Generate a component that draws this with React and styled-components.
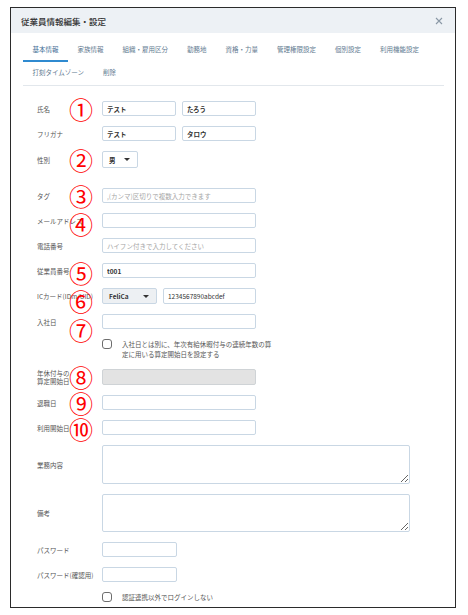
import React from "react";
import styled, { createGlobalStyle } from "styled-components";

const GlobalStyle = createGlobalStyle`
  body {
    margin: 0;
    background: #ffffff;
    font-family: "Noto Sans CJK JP", "Noto Sans", sans-serif;
  }
`;

const Frame = styled.div`
  margin: 7px 0 0 10px;
  width: 446px;
  box-sizing: border-box;
  border: 1.5px solid #2b2b2b;
  background: #fff;
`;

const Header = styled.div`
  height: 25px;
  background: #edf1f5;
  display: flex;
  align-items: center;
  justify-content: space-between;
  padding: 0 12px 0 10px;
`;

const Title = styled.h1`
  margin: 0;
  font-size: 8.5px;
  font-weight: 500;
  color: #333;
`;

const Body = styled.div`
  padding: 0 11px 0 12px;
`;

const TabBar = styled.div`
  display: flex;
  flex-wrap: wrap;
  padding-top: 6px;
  border-bottom: 1px solid #e2e7ec;
`;

const Tab = styled.div`
  height: 21px;
  line-height: 21px;
  padding: 0 9.5px;
  font-size: 6.5px;
  white-space: nowrap;
  color: ${(p) => (p.$active ? "#3f6f96" : "#5f7a90")};
  border-bottom: 2px solid ${(p) => (p.$active ? "#2f8ad0" : "transparent")};
`;

const Form = styled.div`
  display: flex;
  flex-direction: column;
  gap: 10px;
  padding: 15px 0 5px 14px;
`;

const Row = styled.div`
  position: relative;
  display: flex;
  align-items: ${(p) => (p.$top ? "flex-start" : "center")};
  gap: 6px;
  margin-bottom: ${(p) => p.$extra || 0}px;
`;

const Label = styled.div`
  width: 59px;
  flex-shrink: 0;
  font-size: 6.5px;
  line-height: 8px;
  color: #555;
  white-space: nowrap;
`;

const Input = styled.input`
  box-sizing: border-box;
  width: ${(p) => p.$w}px;
  height: ${(p) => p.$h || 15}px;
  margin: 0;
  padding: 0 4px;
  border: 1.5px solid #c9d7e4;
  border-radius: 2px;
  background: ${(p) => (p.disabled ? "#e3e3e3" : "#fff")};
  border-color: ${(p) => (p.disabled ? "#cfd3d6" : "#c9d7e4")};
  font-family: inherit;
  font-size: 6.5px;
  font-weight: 600;
  color: #333;
  outline: none;

  &::placeholder {
    color: #a5a5a5;
    font-weight: 400;
  }
`;

const TextArea = styled.textarea`
  box-sizing: border-box;
  width: 308px;
  height: ${(p) => p.$h}px;
  margin: 0;
  padding: 3px 4px;
  border: 1.5px solid #c9d7e4;
  border-radius: 2px;
  font-family: inherit;
  font-size: 6.5px;
  outline: none;
`;

const Select = styled.div`
  box-sizing: border-box;
  width: ${(p) => p.$w}px;
  height: ${(p) => p.$h}px;
  display: flex;
  align-items: center;
  justify-content: space-between;
  padding: 0 7px 0 6px;
  border: 1.5px solid #c9d7e4;
  border-radius: 2px;
  background: ${(p) => p.$bg || "#fff"};
  font-size: 6.5px;
  font-weight: 700;
  color: #333;
`;

const Caret = styled.span`
  width: 0;
  height: 0;
  border-left: 3px solid transparent;
  border-right: 3px solid transparent;
  border-top: 3.5px solid #333;
`;

const CheckRow = styled.div`
  display: flex;
  align-items: flex-start;
  gap: 10px;
  margin-left: 65px;
`;

const CheckBox = styled.span`
  box-sizing: border-box;
  flex-shrink: 0;
  width: 10px;
  height: 10px;
  margin-top: ${(p) => p.$mt || 0}px;
  border: 1px solid #6d6d6d;
  border-radius: 3px;
  background: #fff;
`;

const CheckText = styled.div`
  font-size: 6.5px;
  line-height: 10px;
  color: #555;
`;

const Mark = styled.span`
  position: absolute;
  left: 32px;
  top: calc(50% - 13px + ${(p) => p.$dy || 0}px);
  font-size: 24px;
  line-height: 26px;
  color: #ff0000;
  pointer-events: none;
`;

const CloseIcon = () => (
  <svg width="8" height="8" viewBox="0 0 8 8">
    <path d="M1 1 L7 7 M7 1 L1 7" stroke="#8a98a5" strokeWidth="1.1" />
  </svg>
);

const tabs = [
  "基本情報",
  "家族情報",
  "組織・雇用区分",
  "勤務地",
  "資格・力量",
  "管理権限設定",
  "個別設定",
  "利用機能設定",
  "打刻タイムゾーン",
  "削除",
];

function App() {
  return (
    <>
      <GlobalStyle />
      <Frame>
        <Header>
          <Title>従業員情報編集・設定</Title>
          <CloseIcon />
        </Header>
        <Body>
          <TabBar>
            {tabs.map((t, i) => (
              <Tab key={t} $active={i === 0}>
                {t}
              </Tab>
            ))}
          </TabBar>
          <Form>
            <Row>
              <Label>氏名</Label>
              <Input $w={74} defaultValue="テスト" />
              <Input $w={74} defaultValue="たろう" />
              <Mark>①</Mark>
            </Row>
            <Row>
              <Label>フリガナ</Label>
              <Input $w={74} defaultValue="テスト" />
              <Input $w={74} defaultValue="タロウ" />
            </Row>
            <Row $extra={10}>
              <Label>性別</Label>
              <Select $w={36} $h={17}>
                男<Caret />
              </Select>
              <Mark>②</Mark>
            </Row>
            <Row>
              <Label>タグ</Label>
              <Input $w={154} placeholder=",(カンマ)区切りで複数入力できます" />
              <Mark>③</Mark>
            </Row>
            <Row>
              <Label>メールアドレス</Label>
              <Input $w={154} />
              <Mark $dy={3}>④</Mark>
            </Row>
            <Row>
              <Label>電話番号</Label>
              <Input $w={154} placeholder="ハイフン付きで入力してください" />
            </Row>
            <Row>
              <Label>従業員番号</Label>
              <Input $w={154} defaultValue="t001" />
              <Mark $dy={2}>⑤</Mark>
            </Row>
            <Row>
              <Label>ICカード(IDm/UID)</Label>
              <Select $w={55} $h={16} $bg="#edf0f3">
                FeliCa
                <Caret />
              </Select>
              <Input $w={93} $h={16} defaultValue="1234567890abcdef" style={{ fontWeight: 400 }} />
              <Mark $dy={5}>⑥</Mark>
            </Row>
            <Row>
              <Label>入社日</Label>
              <Input $w={154} />
              <Mark $dy={8}>⑦</Mark>
            </Row>
            <CheckRow>
              <CheckBox />
              <CheckText>
                入社日とは別に、年次有給休暇付与の連続年数の算
                <br />
                定に用いる算定開始日を設定する
              </CheckText>
            </CheckRow>
            <Row>
              <Label>
                年休付与の
                <br />
                算定開始日
              </Label>
              <Input $w={154} $h={16} disabled />
              <Mark>⑧</Mark>
            </Row>
            <Row>
              <Label>退職日</Label>
              <Input $w={154} />
              <Mark>⑨</Mark>
            </Row>
            <Row>
              <Label>利用開始日</Label>
              <Input $w={154} />
              <Mark $dy={1}>⑩</Mark>
            </Row>
            <Row>
              <Label>業務内容</Label>
              <TextArea $h={39} />
            </Row>
            <Row>
              <Label>備考</Label>
              <TextArea $h={38} />
            </Row>
            <Row>
              <Label>パスワード</Label>
              <Input $w={75} type="password" />
            </Row>
            <Row>
              <Label>パスワード(確認用)</Label>
              <Input $w={75} type="password" />
            </Row>
            <CheckRow>
              <CheckBox />
              <CheckText>認証連携以外でログインしない</CheckText>
            </CheckRow>
          </Form>
        </Body>
      </Frame>
    </>
  );
}

export default App;
